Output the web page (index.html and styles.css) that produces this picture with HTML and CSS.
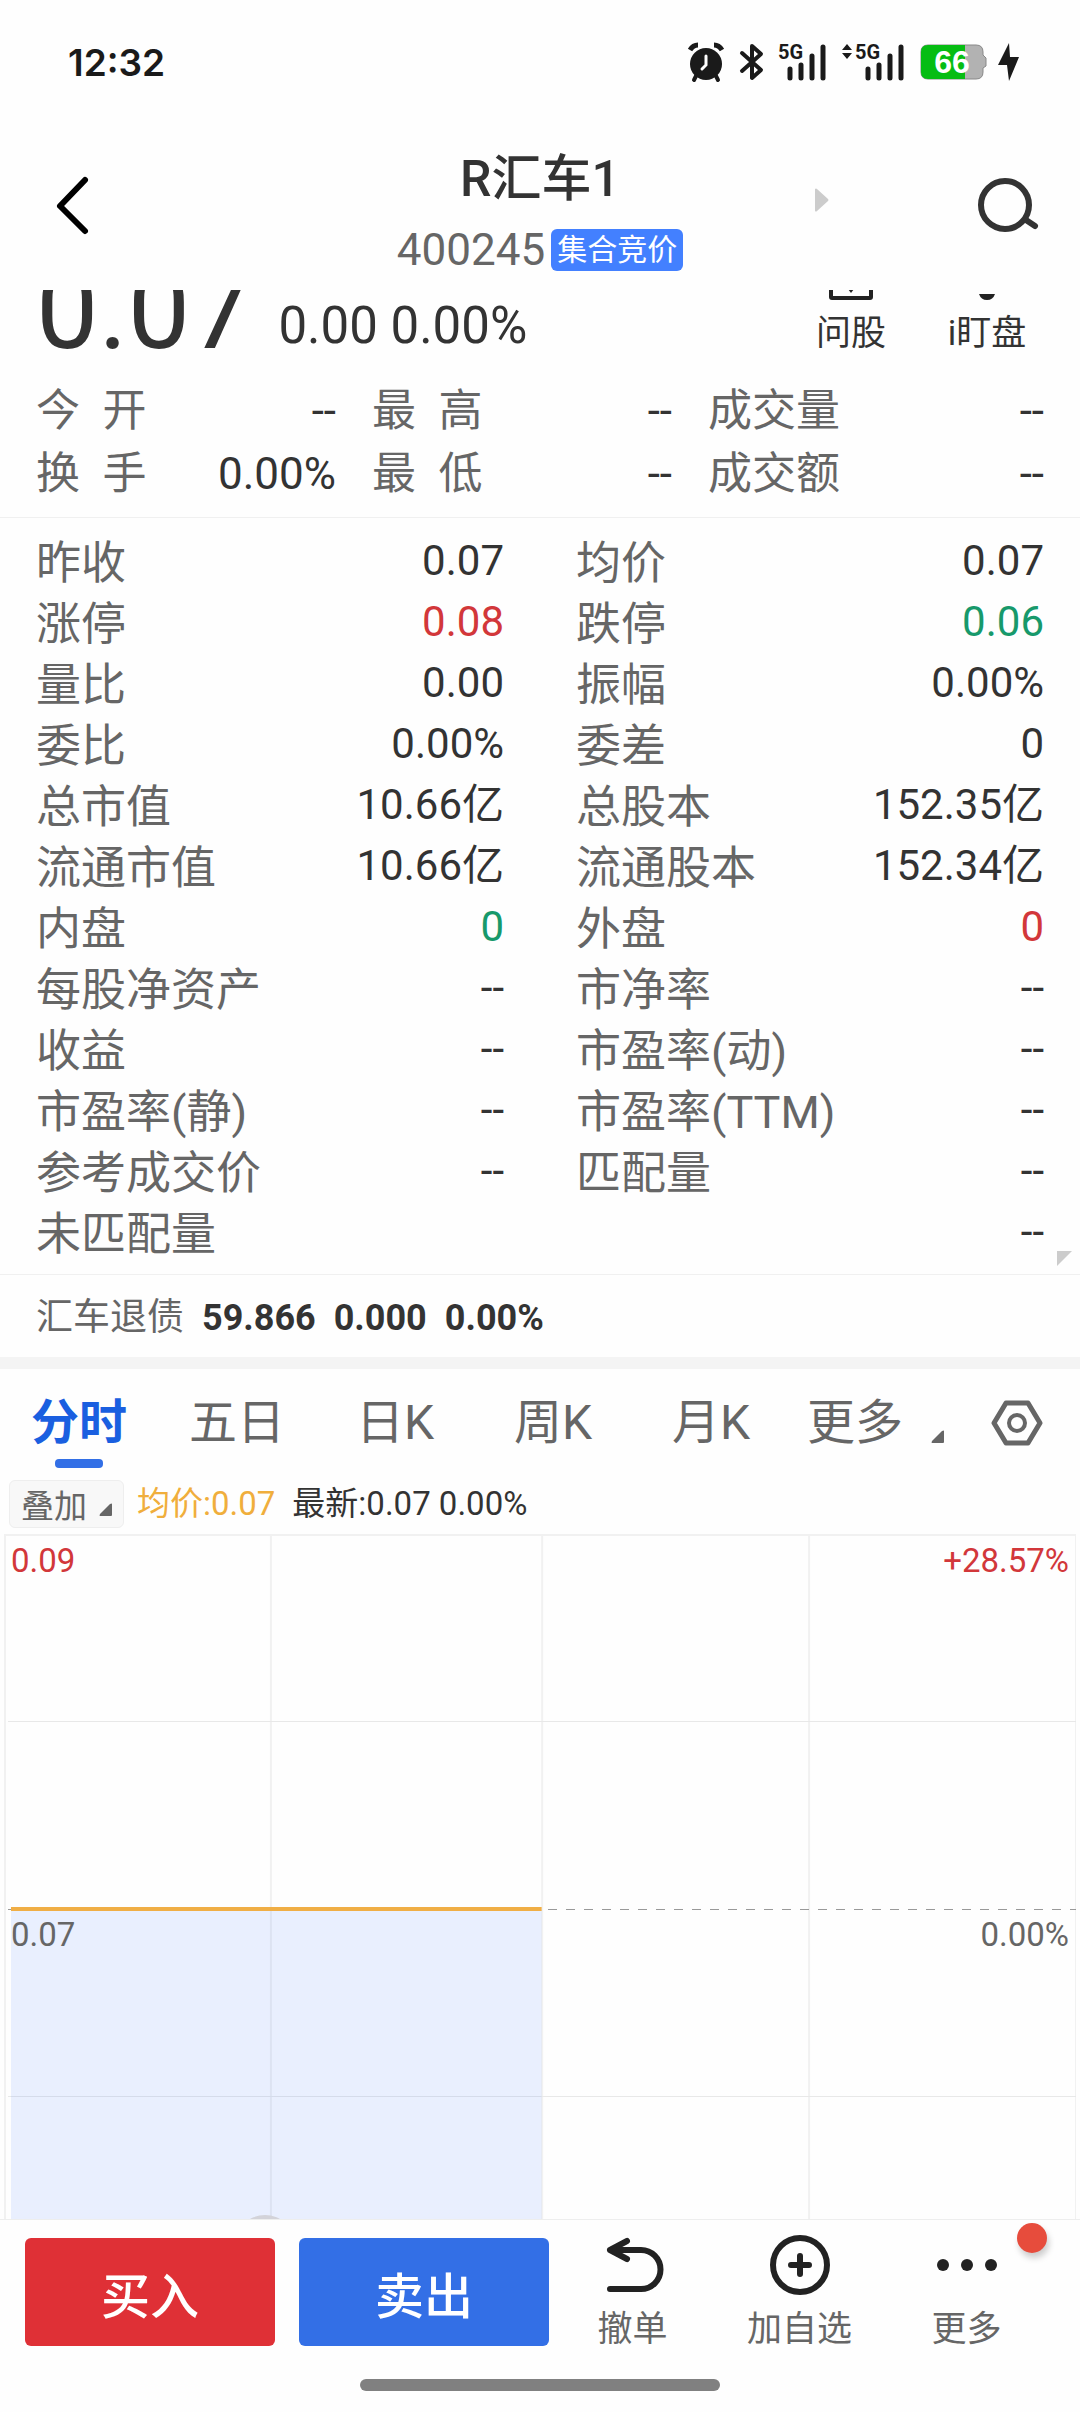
FILE: index.html
```html
<!DOCTYPE html>
<html lang="zh-CN">

<head>
    <meta charset="UTF-8">
    <meta name="viewport" content="width=device-width, initial-scale=1.0">
    <title>R汇车1 400245</title>
    <link rel="stylesheet" href="styles.css">
</head>

<body>
    <div class="status-bar">
        <span class="time">12:32</span>
        <div class="status-icons">
            <svg class="alarm" width="38" height="40" viewBox="0 0 38 40">
                <circle cx="19" cy="22" r="16" fill="#1a1a1a" />
                <path d="M3 8 Q6 3 11 3 M35 8 Q32 3 27 3" stroke="#1a1a1a" stroke-width="5" fill="none" />
                <path d="M9 34 L7 38 M29 34 L31 38" stroke="#1a1a1a" stroke-width="4" stroke-linecap="round" />
                <path d="M19 14 V23 L15 27" stroke="#fff" stroke-width="3" fill="none" stroke-linecap="round" />
            </svg>
            <svg class="bluetooth" width="24" height="40" viewBox="0 0 24 40">
                <path d="M2 11 L21 28 L12 36 V4 L21 12 L2 29" fill="none" stroke="#1a1a1a" stroke-width="4"
                    stroke-linejoin="round" stroke-linecap="round" />
            </svg>
            <svg class="signal" width="48" height="40" viewBox="0 0 48 40">
                <text x="0" y="17" class="net">5G</text>
                <path d="M12 27 V36 M23 23 V36 M34 14 V36 M45 5 V36" stroke="#1a1a1a" stroke-width="5"
                    stroke-linecap="round" />
            </svg>
            <svg class="signal" width="62" height="40" viewBox="0 0 62 40">
                <path d="M0 8 L5 2 L10 8 Z M0 11 L5 17 L10 11 Z" fill="#1a1a1a" />
                <text x="13" y="17" class="net">5G</text>
                <path d="M26 27 V36 M37 23 V36 M48 14 V36 M59 5 V36" stroke="#1a1a1a" stroke-width="5"
                    stroke-linecap="round" />
            </svg>
            <svg class="battery" width="67" height="36" viewBox="0 0 67 36">
                <path d="M8 1 H56 Q63 1 63 8 V11 L66 14 V22 L63 24 V28 Q63 35 56 35 H8 Q1 35 1 28 V8 Q1 1 8 1 Z"
                    fill="#b2b2b2" stroke="#888" />
                <path d="M45 1 H8 Q1 1 1 8 V28 Q1 35 8 35 H45 Z" fill="#06bd13" />
                <text x="32" y="29" text-anchor="middle" class="level">66</text>
            </svg>
            <svg width="22" height="40" viewBox="0 0 22 40">
                <path d="M11 1 L0 23 H9 L11 39 L21 15 H12 Z" fill="#1a1a1a" />
            </svg>
        </div>
    </div>

    <header class="nav-bar">
        <button class="icon-btn" aria-label="返回">
            <svg width="36" height="60" viewBox="0 0 36 60">
                <path d="M30 5 L5 31 L30 56" fill="none" stroke="#000" stroke-width="6" stroke-linecap="round"
                    stroke-linejoin="round" />
            </svg>
        </button>
        <div class="stock">
            <h1>R汇车1</h1>
            <div class="code">400245<span class="tag">集合竞价</span></div>
        </div>
        <svg class="next" width="14" height="24" viewBox="0 0 14 24">
            <path d="M0 1 Q1 0 2 1 L13 11 Q14 12 13 13 L2 23 Q1 24 0 23 Z" fill="#ccc" />
        </svg>
        <button class="icon-btn" aria-label="搜索">
            <svg width="60" height="60" viewBox="0 0 60 60">
                <circle cx="27" cy="30" r="24" fill="none" stroke="#333" stroke-width="6" />
                <path d="M48 45 L57 51" stroke="#333" stroke-width="6" stroke-linecap="round" />
            </svg>
        </button>
    </header>

    <main>
        <section class="quote">
            <span class="price">0.07</span>
            <span class="change">0.00 0.00%</span>
            <div class="tools">
                <button>
                    <svg width="48" height="48" viewBox="0 0 48 48">
                        <path d="M4 4 V44 Q4 45 5 45 H43 Q44 45 44 44 V4 Z" fill="none" stroke="#222"
                            stroke-width="4" />
                        <path d="M21 36 H27 L24 40 Z" fill="#222" />
                    </svg>
                    问股
                </button>
                <button>
                    <svg width="48" height="48" viewBox="0 0 48 48">
                        <path d="M16 41 H32 Q30 47 24 47 Q18 47 16 41 Z" fill="#222" />
                    </svg>
                    i盯盘
                </button>
            </div>
        </section>

        <dl class="summary">
            <div><dt>今&ensp;开</dt><dd>--</dd></div>
            <div><dt>最&ensp;高</dt><dd>--</dd></div>
            <div><dt>成交量</dt><dd>--</dd></div>
            <div><dt>换&ensp;手</dt><dd>0.00%</dd></div>
            <div><dt>最&ensp;低</dt><dd>--</dd></div>
            <div><dt>成交额</dt><dd>--</dd></div>
        </dl>

        <dl class="details">
            <div><dt>昨收</dt><dd>0.07</dd></div>
            <div><dt>均价</dt><dd>0.07</dd></div>
            <div><dt>涨停</dt><dd class="up">0.08</dd></div>
            <div><dt>跌停</dt><dd class="down">0.06</dd></div>
            <div><dt>量比</dt><dd>0.00</dd></div>
            <div><dt>振幅</dt><dd>0.00%</dd></div>
            <div><dt>委比</dt><dd>0.00%</dd></div>
            <div><dt>委差</dt><dd>0</dd></div>
            <div><dt>总市值</dt><dd>10.66亿</dd></div>
            <div><dt>总股本</dt><dd>152.35亿</dd></div>
            <div><dt>流通市值</dt><dd>10.66亿</dd></div>
            <div><dt>流通股本</dt><dd>152.34亿</dd></div>
            <div><dt>内盘</dt><dd class="down">0</dd></div>
            <div><dt>外盘</dt><dd class="up">0</dd></div>
            <div><dt>每股净资产</dt><dd>--</dd></div>
            <div><dt>市净率</dt><dd>--</dd></div>
            <div><dt>收益</dt><dd>--</dd></div>
            <div><dt>市盈率(动)</dt><dd>--</dd></div>
            <div><dt>市盈率(静)</dt><dd>--</dd></div>
            <div><dt>市盈率(TTM)</dt><dd>--</dd></div>
            <div><dt>参考成交价</dt><dd>--</dd></div>
            <div><dt>匹配量</dt><dd>--</dd></div>
            <div class="wide"><dt>未匹配量</dt><dd>--</dd></div>
        </dl>

        <div class="bond">
            <span class="bond-name">汇车退债</span>
            <b>59.866</b>
            <b>0.000</b>
            <b>0.00%</b>
        </div>

        <nav class="tabs">
            <button class="tab active">分时</button>
            <button class="tab">五日</button>
            <button class="tab">日K</button>
            <button class="tab">周K</button>
            <button class="tab">月K</button>
            <button class="tab-more">更多
                <svg width="13" height="13" viewBox="0 0 13 13">
                    <path d="M13 1 V12 Q13 13 12 13 H1 Q0 13 1 11 L11 1 Q13 0 13 1 Z" fill="#666" />
                </svg>
            </button>
            <button class="setting" aria-label="设置">
                <svg width="52" height="48" viewBox="0 0 52 48">
                    <path d="M15 4 H37 L49 24 L37 44 H15 L3 24 Z" fill="none" stroke="#666" stroke-width="5"
                        stroke-linejoin="round" />
                    <circle cx="26" cy="24" r="8" fill="none" stroke="#666" stroke-width="4" />
                </svg>
            </button>
        </nav>

        <div class="legend">
            <button class="overlay">叠加
                <svg width="13" height="13" viewBox="0 0 13 13">
                    <path d="M13 1 V12 Q13 13 12 13 H1 Q0 13 1 11 L11 1 Q13 0 13 1 Z" fill="#666" />
                </svg>
            </button>
            <span class="avg">均价:0.07</span>
            <span>最新:0.07 0.00%</span>
        </div>

        <section class="chart">
            <svg class="plot" width="100%" height="748">
                <g stroke="#f1f1f1" stroke-width="2">
                    <path d="M0 1 H2000 M1 0 V748" />
                    <line x1="24.9%" y1="0" x2="24.9%" y2="748" />
                    <line x1="50.2%" y1="0" x2="50.2%" y2="748" />
                    <line x1="75.1%" y1="0" x2="75.1%" y2="748" />
                    <line x1="100%" y1="0" x2="100%" y2="748" />
                </g>
                <path d="M4 187.5 H2000 M4 562.5 H2000" stroke="#e8e8e8" />
                <path d="M4 375.5 H2000" stroke="#999" stroke-dasharray="9 9" />
                <rect x="7" y="376" width="49.5%" height="372" fill="#326fff" fill-opacity="0.1" />
                <rect x="7" y="373" width="49.5%" height="4" fill="#f0ae45" />
                <circle cx="261" cy="711" r="30" fill="#d3d3d9" />
            </svg>
            <span class="axis top up">0.09</span>
            <span class="axis top right up">+28.57%</span>
            <span class="axis mid">0.07</span>
            <span class="axis mid right">0.00%</span>
        </section>
    </main>

    <footer>
        <div class="actions">
            <button class="trade buy">买入</button>
            <button class="trade sell">卖出</button>
            <button class="action">
                <svg width="60" height="60" viewBox="0 0 60 60">
                    <path d="M24 6 L7 15 L24 24 M7 15 H38 A19 19 0 0 1 38 54 H7" fill="none" stroke="#222"
                        stroke-width="6" stroke-linecap="round" stroke-linejoin="round" />
                </svg>
                撤单
            </button>
            <button class="action">
                <svg width="60" height="60" viewBox="0 0 60 60">
                    <circle cx="30" cy="30" r="27" fill="none" stroke="#222" stroke-width="6" />
                    <path d="M21 30 H39 M30 21 V39" stroke="#222" stroke-width="6" stroke-linecap="round" />
                </svg>
                加自选
            </button>
            <button class="action">
                <svg width="60" height="60" viewBox="0 0 60 60" fill="#222">
                    <circle cx="6" cy="30" r="6" />
                    <circle cx="30" cy="30" r="6" />
                    <circle cx="54" cy="30" r="6" />
                </svg>
                更多
                <i class="dot"></i>
            </button>
        </div>
        <div class="home-bar"></div>
    </footer>
</body>

</html>
```

FILE: styles.css
```css
* {
    box-sizing: border-box;
}

body {
    margin: 0;
    height: 100vh;
    display: flex;
    flex-direction: column;
    background-color: #fefefe;
    color: #333;
    font-family: Roboto, "Noto Sans CJK SC", sans-serif;
    overflow: hidden;
}

button {
    margin: 0;
    padding: 0;
    border: none;
    background: none;
    color: inherit;
    font-family: inherit;
}

svg {
    display: block;
    flex-shrink: 0;
    overflow: visible;
}

h1,
dl,
dd {
    margin: 0;
}

.up {
    color: #d2373a;
}

.down {
    color: #17996b;
}

/* status bar */
.status-bar {
    display: flex;
    justify-content: space-between;
    align-items: center;
    height: 124px;
    padding: 0 60px 0 68px;
}

.time {
    font-family: Inter, sans-serif;
    font-size: 37px;
    font-weight: 600;
    color: #1a1a1a;
}

.status-icons {
    display: flex;
    align-items: center;
}

.alarm {
    margin-right: 15px;
}

.bluetooth {
    margin-right: 14px;
}

.signal {
    margin-right: 16px;
}

.battery {
    margin-right: 11px;
}

.net {
    font-size: 20px;
    font-weight: 700;
    fill: #1a1a1a;
}

.level {
    font-family: "Liberation Sans", sans-serif;
    font-size: 32px;
    font-weight: 700;
    fill: #fff;
}

/* title */
.nav-bar {
    position: relative;
    display: flex;
    justify-content: space-between;
    align-items: center;
    height: 166px;
    padding: 0 42px 4px 55px;
}

.stock {
    position: absolute;
    left: 0;
    right: 0;
    top: 24px;
    text-align: center;
    pointer-events: none;
}

.stock h1 {
    font-size: 50px;
    font-weight: 500;
    line-height: 62px;
}

.code {
    display: flex;
    justify-content: center;
    align-items: center;
    gap: 6px;
    font-size: 44px;
    line-height: 80px;
    color: #666;
}

.tag {
    padding: 0 6px;
    border-radius: 6px;
    background-color: #4380ff;
    color: #fff;
    font-size: 30px;
    line-height: 42px;
}

.next {
    position: absolute;
    right: 251px;
    top: 64px;
}

/* quote */
main {
    flex: 1;
    min-height: 0;
    display: flex;
    flex-direction: column;
    overflow: hidden;
}

.quote {
    display: flex;
    align-items: flex-end;
    flex-shrink: 0;
    height: 90px;
    padding: 0 25px 14px 36px;
    overflow: hidden;
}

.price {
    font-size: 111px;
    line-height: 112px;
}

.change {
    margin-left: 26px;
    font-size: 51px;
    line-height: 80px;
}

.tools {
    display: flex;
    margin-left: auto;
    margin-bottom: 7px;
}

.tools button {
    display: flex;
    flex-direction: column;
    align-items: center;
    gap: 8px;
    width: 136px;
    font-size: 35px;
    line-height: 50px;
}

.summary {
    display: grid;
    grid-template-columns: 1fr 1fr 1fr;
    padding: 0 36px 11px;
    border-bottom: 1px solid #f0f0f0;
}

.summary div,
.details div {
    display: flex;
    justify-content: space-between;
}

.summary div {
    font-size: 44px;
    line-height: 63px;
}

.summary div:not(:nth-child(3n)) {
    padding-right: 36px;
}

dt {
    color: #666;
}

.details {
    position: relative;
    display: grid;
    grid-template-columns: 1fr 1fr;
    column-gap: 72px;
    padding: 15px 36px 9px;
    border-bottom: 1px solid #f0f0f0;
}

.details::after {
    content: "";
    position: absolute;
    right: 8px;
    bottom: 8px;
    border-top: 15px solid #ccc;
    border-right: 15px solid transparent;
}

.details dt {
    font-size: 45px;
    line-height: 61px;
}

.details dd {
    font-size: 42px;
    line-height: 56px;
}

.wide {
    grid-column: 1 / 3;
}

.bond {
    display: flex;
    gap: 18px;
    padding: 4px 36px 0;
    border-bottom: 12px solid #f4f4f4;
    font-size: 36px;
    line-height: 78px;
}

.bond-name {
    color: #666;
    font-size: 37px;
}

/* chart tabs */
.tabs {
    display: flex;
    flex-shrink: 0;
    height: 111px;
    padding-bottom: 3px;
    color: #666;
}

.tabs button {
    font-size: 48px;
    line-height: 106px;
}

.tab {
    position: relative;
    width: 158px;
}

.tabs .active {
    color: #1a5fe0;
    font-weight: 700;
}

.active::after {
    content: "";
    position: absolute;
    left: 55px;
    bottom: 9px;
    width: 48px;
    height: 9px;
    border-radius: 4px;
    background-color: #326fe6;
}

.tab-more {
    display: flex;
    align-items: center;
    gap: 28px;
    padding-left: 17px;
}

.tab-more svg {
    margin-top: 27px;
}

.setting {
    display: flex;
    align-items: center;
    margin-left: auto;
    margin-right: 37px;
}

.legend {
    display: flex;
    align-items: center;
    flex-shrink: 0;
    height: 48px;
    padding-left: 9px;
    font-size: 33px;
    line-height: 44px;
}

.overlay {
    display: flex;
    align-items: center;
    gap: 12px;
    height: 48px;
    padding: 0 11px;
    border: 1px solid #eee;
    border-radius: 6px;
    background-color: #f8f8f8;
    color: #666;
    font-size: 33px;
}

.overlay svg {
    margin-top: 10px;
}

.avg {
    margin: 0 17px 0 13px;
    color: #f0ae3c;
}

/* chart */
.chart {
    position: relative;
    flex: 1;
    min-height: 0;
    margin: 6px 4px 0;
    overflow: hidden;
}

.axis {
    position: absolute;
    left: 7px;
    font-size: 33px;
    line-height: 40px;
    color: #666;
}

.axis.up {
    color: #d2373a;
}

.right {
    left: auto;
    right: 7px;
}

.top {
    top: 7px;
}

.mid {
    top: 381px;
}

/* bottom bar */
footer {
    border-top: 1px solid #eee;
    background-color: #fefefe;
}

.actions {
    display: flex;
    align-items: flex-start;
    height: 126px;
    padding: 18px 30px 0 25px;
}

.trade {
    width: 250px;
    height: 108px;
    border-radius: 6px;
    color: #fff;
    font-size: 49px;
    font-weight: 500;
}

.buy {
    margin-right: 24px;
    background-color: #df3036;
}

.sell {
    background-color: #336fe6;
}

.action {
    position: relative;
    flex: 1;
    display: flex;
    flex-direction: column;
    align-items: center;
    gap: 10px;
    margin-top: -3px;
    color: #666;
    font-size: 35px;
    line-height: 50px;
}

.dot {
    position: absolute;
    right: 3px;
    top: -12px;
    width: 30px;
    height: 30px;
    border-radius: 50%;
    background-color: #e74c3c;
    box-shadow: 2px 5px 6px #ccc;
}

.home-bar {
    width: 360px;
    height: 12px;
    margin: 33px auto 21px;
    border-radius: 6px;
    background-color: #808080;
}
```
